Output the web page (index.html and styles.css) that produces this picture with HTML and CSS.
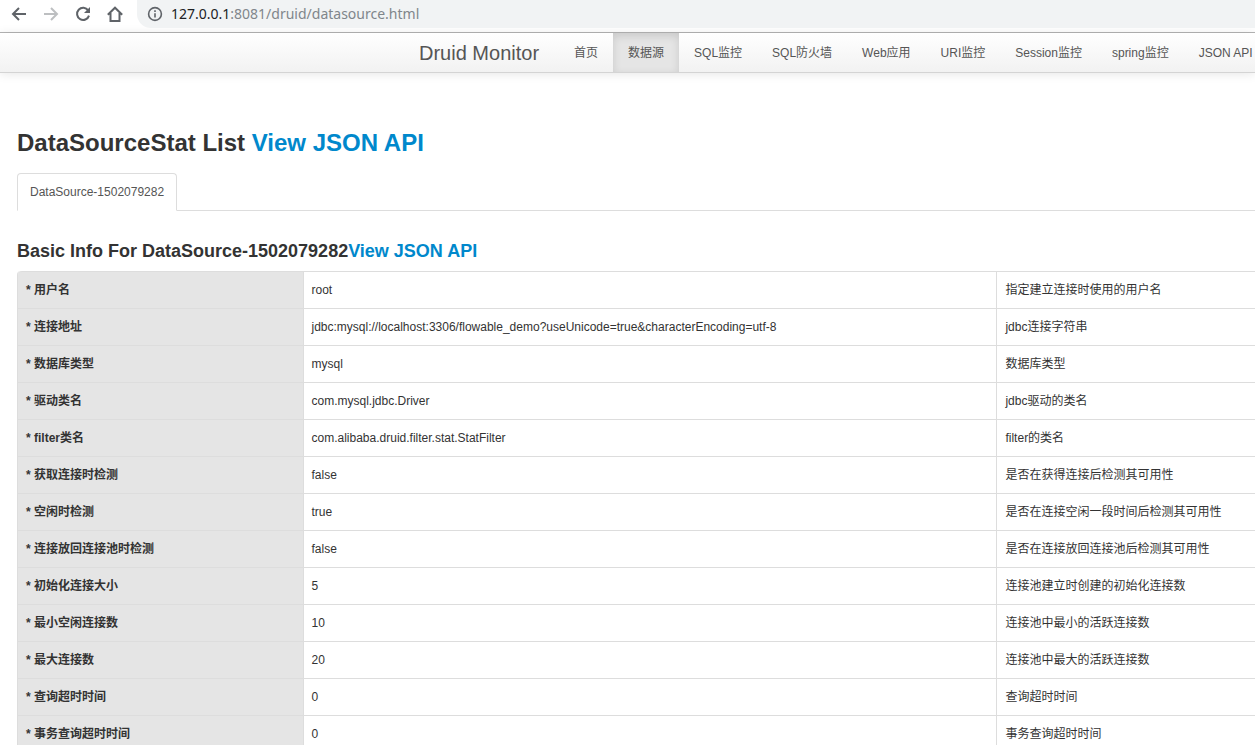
FILE: index.html
```html
<!DOCTYPE html>
<html lang="zh-CN">
<head>
<meta charset="utf-8">
<title>Druid DataSourceStat</title>
<link rel="stylesheet" href="styles.css">
</head>
<body>
<header class="toolbar">
  <button class="tool" type="button" aria-label="Back"><svg viewBox="0 0 16 16"><path d="M15 8H2M8 2L2 8l6 6"/></svg></button>
  <button class="tool tool-off" type="button" aria-label="Forward"><svg viewBox="0 0 16 16"><path d="M1 8h13M8 2l6 6-6 6"/></svg></button>
  <button class="tool" type="button" aria-label="Reload"><svg viewBox="0 0 16 16"><path d="M13.2 4.4A6.1 6.1 0 1 0 14 9.6"/><path class="solid" d="M15 1v6H9z"/></svg></button>
  <button class="tool" type="button" aria-label="Home"><svg viewBox="0 0 16 16"><path d="M.8 8.7L8 1.7l7.2 7M3.5 7v8h9V7"/></svg></button>
  <div class="address">
    <svg class="info" viewBox="0 0 16 16"><circle cx="8" cy="8" r="6.4"/><path d="M8 7.2v4.2M8 4.2v1.7"/></svg>
    <div class="url" role="textbox" aria-label="Address" tabindex="0"><span class="host">127.0.0.1</span>:8081/druid/datasource.html</div>
  </div>
</header>
<nav class="navbar">
  <a class="brand" href="#">Druid Monitor</a>
  <a class="nav-link" href="#">首页</a>
  <a class="nav-link active" href="#">数据源</a>
  <a class="nav-link" href="#">SQL监控</a>
  <a class="nav-link" href="#">SQL防火墙</a>
  <a class="nav-link" href="#">Web应用</a>
  <a class="nav-link" href="#">URI监控</a>
  <a class="nav-link" href="#">Session监控</a>
  <a class="nav-link" href="#">spring监控</a>
  <a class="nav-link" href="#">JSON API</a>
</nav>
<main class="content">
  <h1 class="title">DataSourceStat List <a href="#">View JSON API</a></h1>
  <div class="tabs"><a class="tab" href="#">DataSource-1502079282</a></div>
  <h2 class="subtitle">Basic Info For DataSource-1502079282<a href="#">View JSON API</a></h2>
  <table class="info-table">
    <colgroup><col class="col-name"><col class="col-value"><col></colgroup>
    <tbody>
    <tr><th scope="row">* 用户名</th><td>root</td><td>指定建立连接时使用的用户名</td></tr>
    <tr><th scope="row">* 连接地址</th><td>jdbc:mysql://localhost:3306/flowable_demo?useUnicode=true&amp;characterEncoding=utf-8</td><td>jdbc连接字符串</td></tr>
    <tr><th scope="row">* 数据库类型</th><td>mysql</td><td>数据库类型</td></tr>
    <tr><th scope="row">* 驱动类名</th><td>com.mysql.jdbc.Driver</td><td>jdbc驱动的类名</td></tr>
    <tr><th scope="row">* filter类名</th><td>com.alibaba.druid.filter.stat.StatFilter</td><td>filter的类名</td></tr>
    <tr><th scope="row">* 获取连接时检测</th><td>false</td><td>是否在获得连接后检测其可用性</td></tr>
    <tr><th scope="row">* 空闲时检测</th><td>true</td><td>是否在连接空闲一段时间后检测其可用性</td></tr>
    <tr><th scope="row">* 连接放回连接池时检测</th><td>false</td><td>是否在连接放回连接池后检测其可用性</td></tr>
    <tr><th scope="row">* 初始化连接大小</th><td>5</td><td>连接池建立时创建的初始化连接数</td></tr>
    <tr><th scope="row">* 最小空闲连接数</th><td>10</td><td>连接池中最小的活跃连接数</td></tr>
    <tr><th scope="row">* 最大连接数</th><td>20</td><td>连接池中最大的活跃连接数</td></tr>
    <tr><th scope="row">* 查询超时时间</th><td>0</td><td>查询超时时间</td></tr>
    <tr><th scope="row">* 事务查询超时时间</th><td>0</td><td>事务查询超时时间</td></tr>
    </tbody>
  </table>
</main>
</body>
</html>
```
FILE: styles.css
```css
* { box-sizing: border-box; }
html { overflow: hidden; }
body {
  margin: 0;
  background: #fff;
  color: #333;
  font: 12px/20px "Liberation Sans", "Noto Sans CJK SC", sans-serif;
}
a { color: #08c; text-decoration: none; }

.toolbar {
  display: flex;
  align-items: flex-start;
  gap: 16px;
  height: 33px;
  padding-left: 11px;
  border-bottom: 1px solid #b4b4b4;
}
.tool {
  display: flex;
  width: 16px;
  margin: 6px 0 0;
  padding: 0;
  border: 0;
  background: none;
  color: #5f6368;
}
.tool-off { color: #bdbfc1; }
.tool svg, .info {
  width: 16px;
  height: 16px;
  fill: none;
  stroke: currentColor;
  stroke-width: 2;
}
.tool .solid { fill: currentColor; stroke: none; }
.address {
  display: flex;
  flex: 1;
  align-items: center;
  gap: 8px;
  height: 28px;
  margin-left: -2px;
  padding-left: 10px;
  border-radius: 0 0 0 14px;
  background: #f1f3f4;
}
.address .info { color: #5f6368; stroke-width: 1.6; }
.url {
  color: #80868b;
  font: 14px/20px "Noto Sans", "Open Sans", sans-serif;
  white-space: nowrap;
}
.host { color: #202124; }

.navbar {
  display: flex;
  height: 40px;
  padding-left: 399px;
  border-bottom: 1px solid #d4d4d4;
  background: linear-gradient(#fff, #f2f2f2);
  box-shadow: 0 1px 10px rgba(0, 0, 0, 0.1);
  white-space: nowrap;
}
.brand {
  flex: none;
  padding: 10px 20px;
  color: #555;
  font-size: 20px;
}
.nav-link {
  flex: none;
  padding: 10px 15px;
  color: #555;
}
.active {
  background: #e5e5e5;
  box-shadow: inset 0 3px 8px rgba(0, 0, 0, 0.125);
}

.content { padding: 50px 0 0 17px; }
.title {
  margin: 0 0 10px;
  font-size: 24px;
  line-height: 40px;
}
.tabs {
  display: flex;
  margin-bottom: 20px;
  border-bottom: 1px solid #ddd;
}
.tab {
  margin-bottom: -1px;
  padding: 8px 12px;
  border: 1px solid #ddd;
  border-bottom-color: #fff;
  border-radius: 4px 4px 0 0;
  background: #fff;
  color: #555;
  line-height: 20px;
}
.subtitle {
  margin: 0;
  font-size: 18px;
  line-height: 40px;
}
.info-table {
  width: 100%;
  border: 1px solid #ddd;
  border-width: 0 0 0 1px;
  border-radius: 4px 0 0 0;
  border-spacing: 0;
  table-layout: fixed;
}
.col-name { width: 23%; }
.col-value { width: 56.1%; }
.info-table th, .info-table td {
  padding: 8px;
  border-top: 1px solid #ddd;
  text-align: left;
}
.info-table td { border-left: 1px solid #ddd; }
.info-table th { background: #e5e5e5; }
.info-table tr:first-child th { border-top-left-radius: 4px; }
```
